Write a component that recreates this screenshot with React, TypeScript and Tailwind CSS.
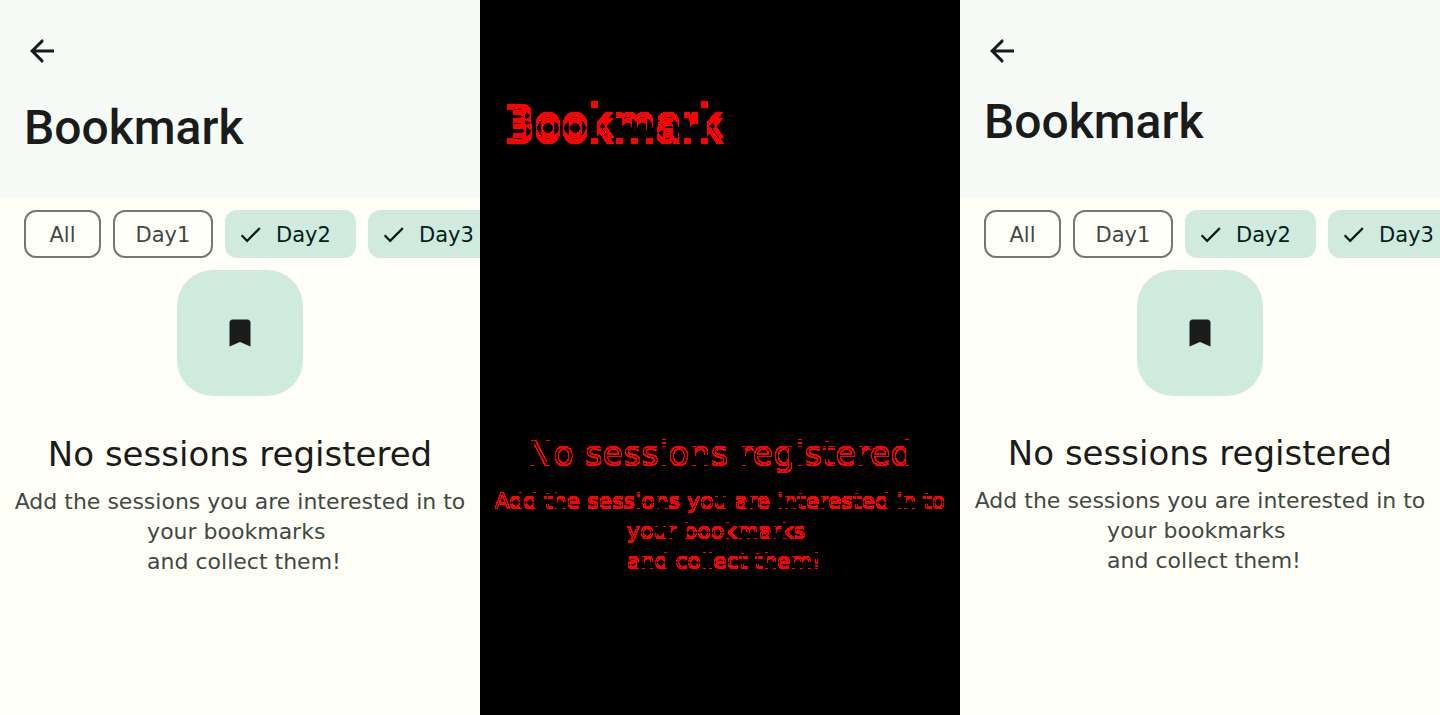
import React from "react";

function ArrowBack() {
  return (
    <svg viewBox="0 0 24 24" className="size-9" fill="currentColor" aria-hidden="true">
      <path d="M20 11H7.83l4.9-4.9c.39-.39.39-1.01 0-1.4l-.7-.7L4 12l8.03 8 .7-.7c.39-.39.39-1.01 0-1.4L7.83 13H20z" />
    </svg>
  );
}

function Check() {
  return (
    <svg viewBox="0 0 24 24" className="size-[27px] shrink-0" fill="currentColor" aria-hidden="true">
      <path d="M9 16.17 4.83 12l-1.42 1.41L9 19 21 7l-1.41-1.41z" />
    </svg>
  );
}

function Bookmark() {
  return (
    <svg viewBox="0 0 24 24" className="size-9" fill="currentColor" aria-hidden="true">
      <path d="M17 3H7c-1.1 0-1.99.9-1.99 2L5 21l7-3 7 3V5c0-1.1-.9-2-2-2z" />
    </svg>
  );
}

const chip = "flex h-12 shrink-0 items-center rounded-xl text-[21px] leading-[30px]";
const outlined = "justify-center border-2 border-[#707974] text-[#404944]";
const selected = "w-[131px] gap-3 bg-[#cfebde] pl-3 text-[#05201a]";

function Filters() {
  return (
    <div className="flex gap-3 overflow-hidden pl-6">
      <button type="button" aria-pressed="false" className={`${chip} ${outlined} w-[77px]`}><span className="pt-0.5">All</span></button>
      <button type="button" aria-pressed="false" className={`${chip} ${outlined} w-[100px]`}><span className="pt-0.5">Day1</span></button>
      <button type="button" aria-pressed="true" className={`${chip} ${selected}`}><Check /><span className="pt-0.5">Day2</span></button>
      <button type="button" aria-pressed="true" className={`${chip} ${selected}`}><Check /><span className="pt-0.5">Day3</span></button>
    </div>
  );
}

function Message({ className, headingClass = "", bodyClass = "" }: { className: string; headingClass?: string; bodyClass?: string }) {
  return (
    <div className={`flex flex-col items-center whitespace-nowrap ${className}`}>
      <h2 className={`text-[34px] leading-[42px] ${headingClass}`}>No sessions registered</h2>
      <p className={`mt-3 flex flex-col items-center text-[22px] leading-[30px] ${bodyClass}`}>
        <span>Add the sessions you are interested in to</span>
        <span className="pl-2">
          your bookmarks
          <br />
          and collect them!
        </span>
      </p>
    </div>
  );
}

const titleClass = "font-['Roboto'] text-5xl leading-[56px] font-medium";

function Screen({ titleGap, messageGap }: { titleGap: string; messageGap: string }) {
  return (
    <section className="min-w-0 overflow-hidden bg-[#fffff7] text-[#191c1a]">
      <header className="h-[198px] bg-[#f6fbf7] px-6 pt-[33px]">
        <button type="button" aria-label="Back" className="block"><ArrowBack /></button>
        <h1 className={`${titleClass} ${titleGap}`}>Bookmark</h1>
      </header>
      <div className="pt-3">
        <Filters />
        <div className="mx-auto mt-3 flex size-[126px] items-center justify-center rounded-[36px] bg-[#cfebde]">
          <Bookmark />
        </div>
        <Message className={messageGap} bodyClass="text-[#404944]" />
      </div>
    </section>
  );
}

function ShiftFilter({ id, dy }: { id: string; dy: number }) {
  return (
    <filter id={id} x="-5%" y="-30%" width="110%" height="160%">
      <feOffset in="SourceGraphic" dy={dy} result="moved" />
      <feComposite in="SourceGraphic" in2="moved" operator="arithmetic" k2={1} k3={-1} result="removed" />
      <feComposite in="moved" in2="SourceGraphic" operator="arithmetic" k2={1} k3={-1} result="added" />
      <feMerge result="both">
        <feMergeNode in="removed" />
        <feMergeNode in="added" />
      </feMerge>
      <feComponentTransfer in="both">
        <feFuncA type="linear" slope={60} intercept={0} />
      </feComponentTransfer>
    </filter>
  );
}

function Difference() {
  return (
    <section className="min-w-0 overflow-hidden bg-black text-[#ff0000]">
      <svg className="absolute size-0" aria-hidden="true">
        <ShiftFilter id="shift-six" dy={-6} />
        <ShiftFilter id="shift-one" dy={-1} />
      </svg>
      <div className="h-[396px] px-6 pt-[100px]">
        <h1 className={`${titleClass} [filter:url(#shift-six)]`}>Bookmark</h1>
      </div>
      <Message className="pt-[37px]" headingClass="[filter:url(#shift-one)]" bodyClass="[filter:url(#shift-one)]" />
    </section>
  );
}

export default function App() {
  return (
    <main className="grid min-h-screen grid-cols-3 bg-[#fffff7] font-['DejaVu_Sans',sans-serif]">
      <Screen titleGap="mt-[31px]" messageGap="pt-[37px]" />
      <Difference />
      <Screen titleGap="mt-[25px]" messageGap="pt-9" />
    </main>
  );
}
